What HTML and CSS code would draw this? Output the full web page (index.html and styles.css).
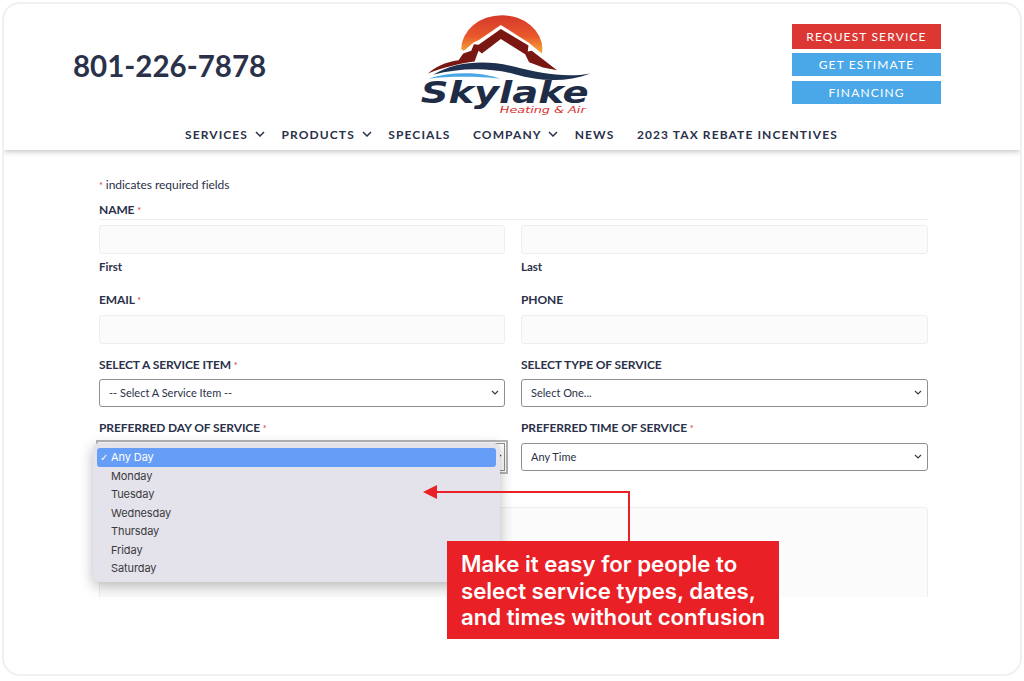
FILE: index.html
```html
<!DOCTYPE html>
<html lang="en">
<head>
    <meta charset="UTF-8">
    <title>Skylake Heating &amp; Air - Request Service</title>
    <link rel="stylesheet" href="styles.css">
</head>
<body>
    <div class="frame">
        <header class="site-header">
            <div class="header-top">
                <p class="phone">801-226-7878</p>
                <svg class="logo" viewBox="60 40 520 305" xmlns="http://www.w3.org/2000/svg">
                    <defs>
                        <linearGradient id="sun" x1="0" y1="0" x2="0" y2="1">
                            <stop offset="0" stop-color="#d5372b"/>
                            <stop offset="0.55" stop-color="#e9582c"/>
                            <stop offset="1" stop-color="#f5b03a"/>
                        </linearGradient>
                    </defs>
                    <path d="M184 145 A122 102 0 0 1 428 145 L426 158 L388 126 L303 72 L236 118 L222 124 L192 150 Z" fill="url(#sun)"/>
                    <path d="M84 218 C105 198 135 184 176 178 L190 158 L214 150 L222 130 L236 132 L303 84 L386 134 L384 152 L396 150 L472 208 L430 200 L388 184 L376 160 L303 114 L246 158 L236 150 L224 182 C180 188 130 200 84 218 Z" fill="#7a1712"/>
                    <path d="M224 182 L303 122 L384 182 C330 176 270 176 224 182 Z" fill="#fff"/>
                    <path d="M100 222 C170 178 270 178 345 198 C420 218 500 232 572 218 C500 246 420 242 345 220 C270 200 180 200 100 222 Z" fill="#1f3150"/>
                    <path d="M85 234 C150 212 240 212 302 234 C230 226 150 226 85 234 Z" fill="#4aa8e6"/>
                    <text class="logo-name" x="62" y="308" textLength="505" lengthAdjust="spacingAndGlyphs">Skylake</text>
                    <text class="logo-sub" x="300" y="338" textLength="258" lengthAdjust="spacingAndGlyphs">Heating &amp; Air</text>
                </svg>
                <div class="header-buttons">
                    <a class="btn btn-red" href="#">REQUEST SERVICE</a>
                    <a class="btn btn-blue" href="#">GET ESTIMATE</a>
                    <a class="btn btn-blue" href="#">FINANCING</a>
                </div>
            </div>
            <nav class="main-nav">
                <a href="#">SERVICES <svg class="nav-chevron" viewBox="0 0 10 6"><path d="M1 1l4 4 4-4"/></svg></a>
                <a href="#">PRODUCTS <svg class="nav-chevron" viewBox="0 0 10 6"><path d="M1 1l4 4 4-4"/></svg></a>
                <a class="nav-plain" href="#">SPECIALS</a>
                <a href="#">COMPANY <svg class="nav-chevron" viewBox="0 0 10 6"><path d="M1 1l4 4 4-4"/></svg></a>
                <a class="nav-plain" href="#">NEWS</a>
                <a href="#">2023 TAX REBATE INCENTIVES</a>
            </nav>
        </header>

        <main class="form-area">
            <p class="required-note"><span class="star">*</span> indicates required fields</p>

            <p class="label label-name">NAME <span class="star">*</span></p>
            <div class="row row-name">
                <div>
                    <div class="input"></div>
                    <p class="sublabel">First</p>
                </div>
                <div>
                    <div class="input"></div>
                    <p class="sublabel">Last</p>
                </div>
            </div>

            <div class="row row-contact">
                <div>
                    <p class="label">EMAIL <span class="star">*</span></p>
                    <div class="input"></div>
                </div>
                <div>
                    <p class="label">PHONE</p>
                    <div class="input"></div>
                </div>
            </div>

            <div class="row row-service">
                <div>
                    <p class="label">SELECT A SERVICE ITEM <span class="star">*</span></p>
                    <div class="select">-- Select A Service Item --
                        <svg class="select-chevron" viewBox="0 0 8 5"><path d="M1 1l3 3 3-3"/></svg>
                    </div>
                </div>
                <div>
                    <p class="label">SELECT TYPE OF SERVICE</p>
                    <div class="select">Select One...
                        <svg class="select-chevron" viewBox="0 0 8 5"><path d="M1 1l3 3 3-3"/></svg>
                    </div>
                </div>
            </div>

            <div class="row row-when">
                <div>
                    <p class="label">PREFERRED DAY OF SERVICE <span class="star">*</span></p>
                    <div class="select select-open">
                        <svg class="select-chevron" viewBox="0 0 8 5"><path d="M1 1l3 3 3-3"/></svg>
                    </div>
                </div>
                <div>
                    <p class="label">PREFERRED TIME OF SERVICE <span class="star">*</span></p>
                    <div class="select">Any Time
                        <svg class="select-chevron" viewBox="0 0 8 5"><path d="M1 1l3 3 3-3"/></svg>
                    </div>
                </div>
            </div>

            <div class="textarea"></div>
        </main>

        <!-- Menu aberto do select -->
        <ul class="day-menu">
            <li class="day-active">Any Day</li>
            <li>Monday</li>
            <li>Tuesday</li>
            <li>Wednesday</li>
            <li>Thursday</li>
            <li>Friday</li>
            <li>Saturday</li>
        </ul>

        <!-- Anotacao -->
        <svg class="callout-arrow" viewBox="0 0 210 54" xmlns="http://www.w3.org/2000/svg">
            <path d="M206 54V5H12" fill="none" stroke="#ea2027" stroke-width="2"/>
            <path d="M0 5L14 -2V12Z" fill="#ea2027"/>
        </svg>
        <div class="callout">Make it easy for people to select service types, dates, and times without confusion</div>
    </div>
</body>
</html>
```

FILE: styles.css
```css
* {
    box-sizing: border-box;
}

body {
    margin: 0;
    background-color: #ffffff;
    font-family: 'Lato', sans-serif;
    color: #2a3149;
}

p {
    margin: 0;
}

.frame {
    position: relative;
    width: 1020px;
    height: 674px;
    margin: 2px;
    border: 2px solid #f0f0f0;
    border-radius: 18px;
    overflow: hidden;
}

/* Header */
.site-header {
    height: 146px;
    background-color: #ffffff;
    box-shadow: 0 2px 5px rgba(0, 0, 0, 0.22);
    position: relative;
}

.header-top {
    display: grid;
    grid-template-columns: 347px 173px 1fr;
    align-items: center;
    height: 112px;
    padding: 10px 79px 0 69px;
}

.phone {
    font-size: 29.5px;
    font-weight: 700;
}

.logo {
    display: block;
    width: 173px;
    height: 102px;
}

.logo-name {
    font-family: 'DejaVu Sans', sans-serif;
    font-size: 88px;
    font-weight: 700;
    font-style: italic;
    fill: #1f2c46;
}

.logo-sub {
    font-family: 'DejaVu Sans', sans-serif;
    font-size: 26px;
    font-style: italic;
    fill: #d8322e;
}

.header-buttons {
    justify-self: end;
    display: flex;
    flex-direction: column;
    gap: 4px;
    width: 149px;
    margin-bottom: 3px;
}

.btn {
    display: flex;
    justify-content: center;
    align-items: center;
    height: 23px;
    font-size: 12px;
    letter-spacing: 1.15px;
    color: #ffffff;
    text-decoration: none;
}

.btn-red {
    height: 25px;
    background-color: #dc3733;
}

.btn-blue {
    background-color: #4aa8e8;
}

.btn-blue:last-child {
    margin-top: 1px;
}

.main-nav {
    display: flex;
    align-items: center;
    gap: 16.5px;
    height: 22px;
    margin-top: 7px;
    padding-left: 181px;
}

.main-nav a {
    display: flex;
    align-items: center;
    gap: 3px;
    font-size: 12px;
    font-weight: 700;
    letter-spacing: 1.1px;
    color: #2a3149;
    text-decoration: none;
    white-space: pre;
}

.main-nav .nav-plain {
    margin-right: 6px;
}

.nav-chevron {
    width: 10px;
    height: 6px;
    fill: none;
    stroke: #2a3149;
    stroke-width: 1.5;
}

/* Form */
.form-area {
    height: 447px;
    padding: 28px 92px 0 95px;
    overflow: hidden;
}

.required-note {
    font-size: 12px;
    line-height: 14px;
    margin-bottom: 11px;
    letter-spacing: -0.05px;
}

.star {
    color: #d8322e;
    font-size: 9px;
    font-weight: 400;
    line-height: 0;
}

.label {
    font-size: 12px;
    font-weight: 700;
    line-height: 14px;
    letter-spacing: -0.1px;
}

.label-name {
    padding-bottom: 2px;
    border-bottom: 1px solid #eeeeee;
    margin-bottom: 5px;
}

.row {
    display: grid;
    grid-template-columns: 406px 407px;
    gap: 16px;
}

.row .label {
    margin-bottom: 8px;
}

.row-service .label {
    margin-bottom: 7px;
}

.input {
    height: 29px;
    background-color: #fbfbfb;
    border: 1px solid #eeeeee;
    border-radius: 3px;
}

.sublabel {
    font-size: 11.5px;
    font-weight: 700;
    line-height: 14px;
    margin-top: 6px;
}

.row-contact {
    margin-top: 19px;
}

.row-service {
    margin-top: 14px;
}

.row-when {
    margin-top: 14px;
}

.select {
    display: flex;
    justify-content: space-between;
    align-items: center;
    height: 28px;
    padding: 0 5px 1px 9px;
    font-size: 11px;
    background-color: #ffffff;
    border: 1px solid #8f8f8f;
    border-radius: 3px;
}

.select-open {
    justify-content: flex-end;
    padding-right: 2px;
    outline: 2px solid #b5b5b5;
    outline-offset: 1px;
    border-radius: 0;
}

.select-chevron {
    width: 8px;
    height: 5px;
    fill: none;
    stroke: #3c3c3c;
    stroke-width: 1.2;
}

.textarea {
    height: 200px;
    margin-top: 36px;
    background-color: #fbfbfb;
    border: 1px solid #eeeeee;
    border-radius: 3px;
}

/* Menu do select */
.day-menu {
    position: absolute;
    left: 89px;
    top: 439px;
    width: 407px;
    height: 139px;
    margin: 0;
    padding: 5px 4px;
    list-style: none;
    background-color: #e4e2ea;
    border-radius: 6px;
    box-shadow: 0 4px 14px rgba(0, 0, 0, 0.28);
    font-family: 'Inter', sans-serif;
    font-size: 11px;
    letter-spacing: -0.1px;
    color: #3a3a40;
}

.day-menu li {
    height: 18.5px;
    line-height: 19.5px;
    padding-left: 14px;
}

.day-menu .day-active {
    position: relative;
    background-color: #669df6;
    border-radius: 3px;
    color: #ffffff;
}

.day-active::before {
    content: "\2713";
    position: absolute;
    left: 3px;
    font-family: 'DejaVu Sans', sans-serif;
    font-size: 10px;
}

/* Anotacao */
.callout-arrow {
    position: absolute;
    left: 419px;
    top: 483px;
    width: 210px;
    height: 54px;
    overflow: visible;
}

.callout {
    position: absolute;
    left: 443px;
    top: 537px;
    width: 332px;
    height: 98px;
    padding: 10px 10px 0 14px;
    background-color: #ea2027;
    color: #ffffff;
    font-family: 'Inter', sans-serif;
    font-size: 22.2px;
    font-weight: 600;
    line-height: 26.5px;
}
```
